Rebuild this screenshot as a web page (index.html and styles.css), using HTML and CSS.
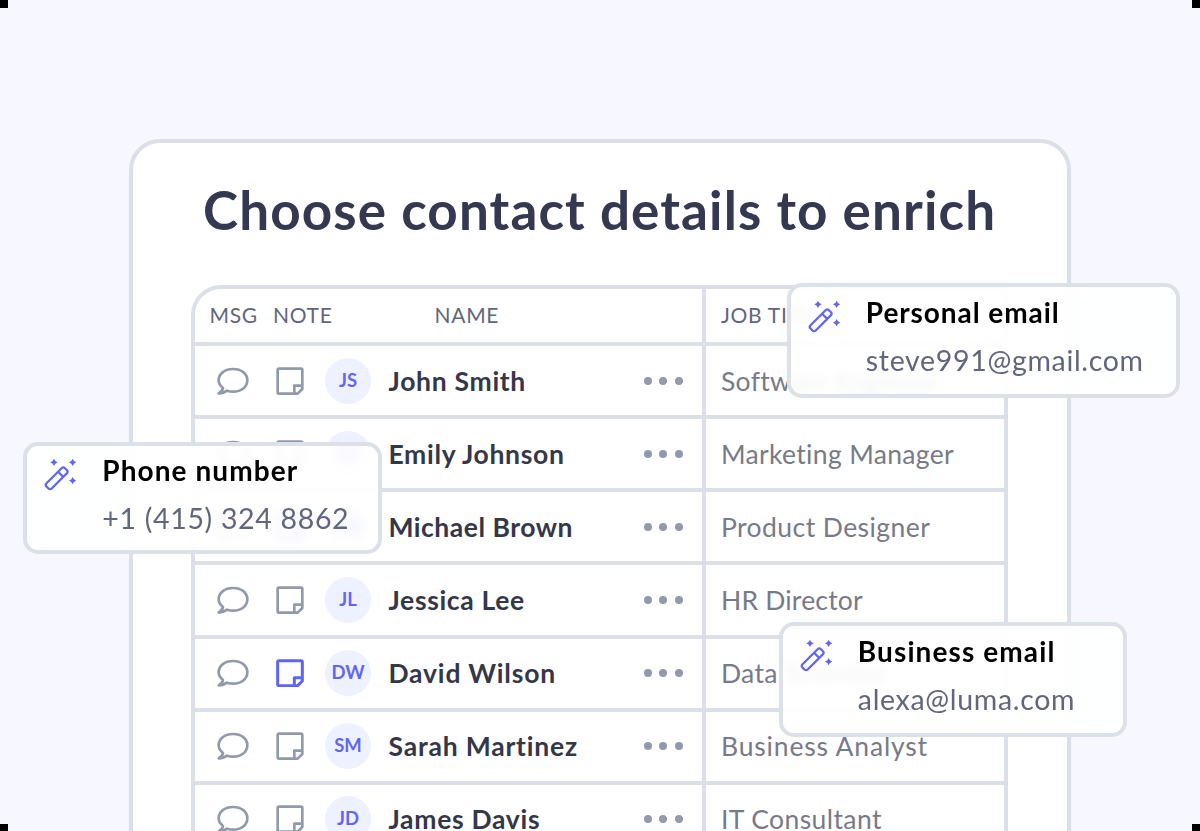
FILE: index.html
```html
<!DOCTYPE html>
<html lang="en">
<head>
<meta charset="utf-8">
<title>Choose contact details to enrich</title>
<link rel="stylesheet" href="styles.css">
</head>
<body>
<svg class="defs" width="0" height="0" aria-hidden="true">
  <symbol id="msg" viewBox="0 0 96 84"><path d="M18 63C10 57 5 49 5 40C5 20 24 6 48 6C73 6 91 20 91 40C91 60 73 74 48 74C42 74 36 73 30 71C22 77 14 80 5 79C12 75 17 70 18 63Z"/></symbol>
  <symbol id="note" viewBox="0 0 84 84"><path d="M9 5H75Q79 5 79 9V66L65 80H9Q5 80 5 76V9Q5 5 9 5ZM55 80V56H79"/></symbol>
  <symbol id="wand" viewBox="0 0 100 100">
    <g transform="rotate(-45 38 61)"><rect class="wand-line" x="-1" y="50" width="78" height="22" rx="7"/><path class="wand-line" d="M55 50V72"/></g>
    <path class="wand-star" d="M30 2L34 9L41 13L34 17L30 24L26 17L19 13L26 9ZM86 2L90 9L97 13L90 17L86 24L82 17L75 13L82 9ZM86 57L90 64L97 68L90 72L86 79L82 72L75 68L82 64Z"/>
  </symbol>
</svg>
<main class="stage">
  <i class="corner tl"></i><i class="corner tr"></i><i class="corner bl"></i><i class="corner br"></i>
  <section class="card">
    <h1 class="title">Choose contact details to enrich</h1>
    <div class="table">
      <div class="row head"><div class="person"><span class="h-msg">MSG</span><span class="h-note">NOTE</span><span class="h-name">NAME</span></div><div class="job">JOB TITLE</div></div>
      <div class="row"><div class="person"><svg class="msg"><use href="#msg"/></svg><svg class="note"><use href="#note"/></svg><b class="avatar">JS</b><span class="name n1">John Smith</span><span class="dots"><i></i><i></i><i></i></span></div><div class="job j1">Software Engineer</div></div>
      <div class="row"><div class="person"><svg class="msg"><use href="#msg"/></svg><svg class="note"><use href="#note"/></svg><b class="avatar">EJ</b><span class="name n2">Emily Johnson</span><span class="dots"><i></i><i></i><i></i></span></div><div class="job j2">Marketing Manager</div></div>
      <div class="row"><div class="person"><svg class="msg"><use href="#msg"/></svg><svg class="note active"><use href="#note"/></svg><b class="avatar">MB</b><span class="name n3">Michael Brown</span><span class="dots"><i></i><i></i><i></i></span></div><div class="job j3">Product Designer</div></div>
      <div class="row"><div class="person"><svg class="msg"><use href="#msg"/></svg><svg class="note"><use href="#note"/></svg><b class="avatar">JL</b><span class="name n4">Jessica Lee</span><span class="dots"><i></i><i></i><i></i></span></div><div class="job j4">HR Director</div></div>
      <div class="row"><div class="person"><svg class="msg"><use href="#msg"/></svg><svg class="note active"><use href="#note"/></svg><b class="avatar">DW</b><span class="name n5">David Wilson</span><span class="dots"><i></i><i></i><i></i></span></div><div class="job j5">Data Scientist</div></div>
      <div class="row"><div class="person"><svg class="msg"><use href="#msg"/></svg><svg class="note"><use href="#note"/></svg><b class="avatar">SM</b><span class="name n6">Sarah Martinez</span><span class="dots"><i></i><i></i><i></i></span></div><div class="job j6">Business Analyst</div></div>
      <div class="row"><div class="person"><svg class="msg"><use href="#msg"/></svg><svg class="note"><use href="#note"/></svg><b class="avatar">JD</b><span class="name n7">James Davis</span><span class="dots"><i></i><i></i><i></i></span></div><div class="job j7">IT Consultant</div></div>
    </div>
  </section>
  <aside class="popup personal"><svg class="wand"><use href="#wand"/></svg><div><h2 class="p-title">Personal email</h2><p class="p-value">steve991@gmail.com</p></div></aside>
  <aside class="popup phone"><svg class="wand"><use href="#wand"/></svg><div><h2 class="p-title">Phone number</h2><p class="p-value">+1 (415) 324 8862</p></div></aside>
  <aside class="popup business"><svg class="wand"><use href="#wand"/></svg><div><h2 class="p-title">Business email</h2><p class="p-value">alexa@luma.com</p></div></aside>
</main>
</body>
</html>
```
FILE: styles.css
```css
* { box-sizing: border-box; margin: 0; }
body { font-family: Lato, "Noto Sans", sans-serif; background: #f6f7ff; }
.defs { position: absolute; }
.stage { position: relative; height: 831px; overflow: hidden; padding-top: 139px; }
.corner { position: absolute; width: 8px; height: 8px; background: #000; }
.tl { left: 0; top: 0; }
.tr { right: 0; top: 0; }
.bl { left: 0; bottom: -1px; }
.br { right: 0; bottom: -1px; }
.card { width: 942px; height: 760px; margin: 0 auto; padding: 36px 58px 0; background: #fff; border: 4px solid #dcdfe7; border-radius: 31px; }
.title { height: 106px; padding-left: 12px; line-height: 61px; font-size: 53px; font-weight: 700; letter-spacing: 1.12px; color: #343851; white-space: nowrap; }
.table { width: 817px; border: 4px solid #dcdfe7; border-radius: 30px 0 0 0; }
.row { display: grid; grid-template-columns: 511px 298px; height: 73.15px; border-bottom: 4px solid #dcdfe7; }
.head { height: 57px; font-size: 21px; letter-spacing: .7px; color: #62667c; }
.person { display: flex; align-items: center; border-right: 4px solid #dcdfe7; padding-left: 21.5px; }
.head .person { padding: 0 0 2px 14.5px; }
.h-msg { width: 63.5px; }
.h-note { width: 161.5px; }
.job { display: flex; align-items: center; padding-left: 15px; font-size: 26.5px; letter-spacing: .3px; color: #777a88; white-space: nowrap; }
.head .job { padding-bottom: 2px; font-size: 21px; letter-spacing: .7px; color: #62667c; }
.msg { width: 32px; height: 28px; margin-right: 27.5px; }
.note { width: 28px; height: 28px; margin-right: 21px; }
.msg, .note { fill: none; stroke: #9299ab; stroke-width: 8; stroke-linejoin: round; }
.note.active { stroke: #5d65f2; stroke-width: 9; }
.avatar { width: 46px; height: 46px; margin-right: 17.5px; border-radius: 50%; background: #eef1ff; color: #6366f1; font-size: 18.5px; line-height: 44px; text-align: center; }
.name { flex: 1; font-size: 26.5px; font-weight: 700; letter-spacing: .7px; color: #343748; white-space: nowrap; }
.n2 { letter-spacing: .67px; }
.n3 { letter-spacing: .5px; }
.n4 { letter-spacing: .65px; }
.n5, .n6 { letter-spacing: .8px; }
.j2 { letter-spacing: .33px; }
.j3 { letter-spacing: .43px; }
.j4 { letter-spacing: .2px; }
.j6 { letter-spacing: .83px; }
.j7 { letter-spacing: .4px; }
.dots { display: flex; gap: 7.6px; margin-right: 19px; }
.dots i { width: 8px; height: 8px; border-radius: 50%; background: #9299ab; }
.popup { position: absolute; display: flex; padding: 0 0 0 16.5px; border: 4px solid #dce0e8; border-radius: 15px; background: rgba(255, 255, 255, .9); backdrop-filter: blur(5px); white-space: nowrap; }
.personal { left: 787px; top: 283px; width: 393px; height: 115px; }
.phone { left: 23px; top: 442px; width: 359px; height: 112px; padding-left: 17px; }
.business { left: 779px; top: 622px; width: 348px; height: 115px; }
.wand { width: 33.3px; height: 33.3px; margin: 13px 25px 0 0; }
.phone .wand { margin-top: 12px; }
.wand-line { fill: none; stroke: #6167f3; stroke-width: 6.8; }
.wand-star { fill: #6167f3; }
.p-title { height: 56px; padding-top: 8px; line-height: 34px; font-size: 28px; letter-spacing: .93px; color: #000; }
.phone .p-title { height: 55px; padding-top: 7px; letter-spacing: 1.08px; }
.business .p-title { padding-top: 7.5px; letter-spacing: 1.1px; }
.p-value { line-height: 34px; font-size: 28.5px; letter-spacing: .68px; color: #62667c; }
```
